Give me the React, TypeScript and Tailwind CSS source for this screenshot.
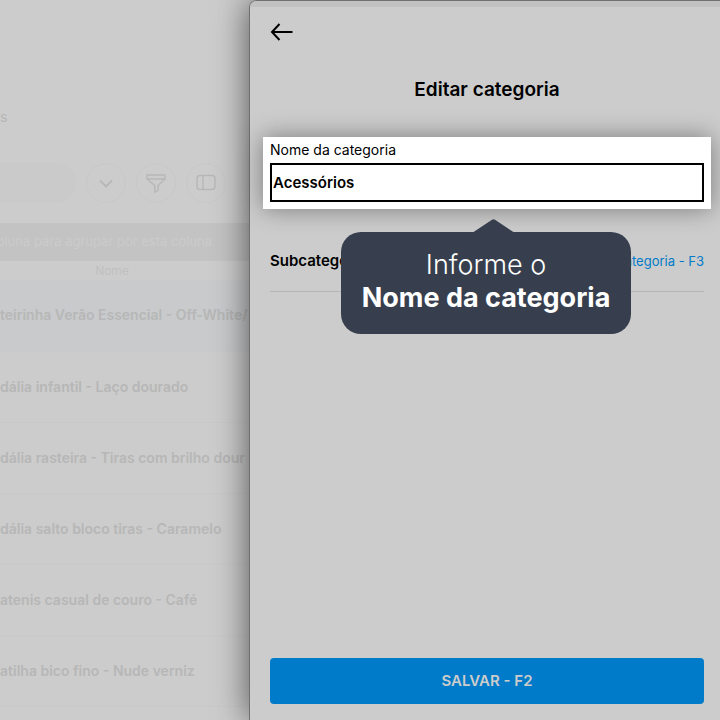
import { useState } from 'react'
import clsx from 'clsx'

const products = [
  'teirinha Verão Essencial - Off-White/',
  'dália infantil - Laço dourado',
  'dália rasteira - Tiras com brilho dour',
  'dália salto bloco tiras - Caramelo',
  'atenis casual de couro - Café',
  'atilha bico fino - Nude verniz',
]

function ProductList() {
  return (
    <main className="min-w-0 overflow-hidden text-[#b7b7b7]">
      <p className="h-[163px] pt-[107px] text-sm">s</p>

      {/* Barra de busca e filtros */}
      <div className="flex h-10 items-center justify-end gap-[10px] pr-[23px]">
        <div className="h-10 flex-1 rounded-r-full bg-[#cacaca]" />
        <button aria-label="Mais opções" className="flex size-10 items-center justify-center rounded-full border border-[#c8c8c8]">
          <svg className="h-3 w-4" viewBox="0 0 16 12" fill="none" stroke="currentColor" strokeWidth="1.8">
            <path d="M2 3.500l6 6 6-6" />
          </svg>
        </button>
        <button aria-label="Filtrar" className="flex size-10 items-center justify-center rounded-full border border-[#c8c8c8]">
          <svg className="size-5" viewBox="0 0 20 20" fill="none" stroke="currentColor" strokeWidth="1.4" strokeLinejoin="round">
            <path d="M1 2h18v4L12 12.500v5l-3.300 1.700v-6.700L1 6zM1 6h18" />
          </svg>
        </button>
        <button aria-label="Colunas" className="flex size-10 items-center justify-center rounded-full border border-[#c8c8c8]">
          <svg className="size-5" viewBox="0 0 20 20" fill="none" stroke="currentColor" strokeWidth="1.4">
            <rect x="1" y="2.500" width="18" height="14" rx="3" />
            <path d="M7 2.500v14" />
          </svg>
        </button>
      </div>

      {/* Tabela de produtos */}
      <div className="mt-5 flex h-[38px] items-center justify-end bg-[#c3c3c3] pr-[37px] text-[13px] whitespace-nowrap text-[#cbcbcb]">
        oluna para agrupar por esta coluna
      </div>
      <table className="w-full table-fixed border-collapse text-left">
        <thead>
          <tr className="h-[19px]">
            <th className="p-0 pr-[25px] text-center text-xs leading-4 font-normal text-[#c0c0c0]">Nome</th>
          </tr>
        </thead>
        <tbody>
          {products.map((product, i) => (
            <tr key={product} className={clsx('h-[71px] border-b border-[#c9c9c9]', i === 0 && 'bg-[#c8cacc]')}>
              <td className="p-0 text-sm font-semibold whitespace-nowrap">{product}</td>
            </tr>
          ))}
        </tbody>
      </table>
    </main>
  )
}

function Tooltip() {
  return (
    <div
      role="tooltip"
      className="absolute top-full left-[78px] z-20 mt-[23px] w-[290px] rounded-[20px] bg-[#373f4e] pt-4 pb-5 text-center text-[27px] leading-[33px] text-white"
    >
      <svg className="absolute -top-[13px] left-[131px] h-[14px] w-[43px]" viewBox="0 0 43 14" fill="#373f4e">
        <path d="M0 14L20 .8q1.500-1 3 0l20 13.200z" />
      </svg>
      <p className="font-light">Informe o</p>
      <p className="font-bold">Nome da categoria</p>
    </div>
  )
}

export default function App() {
  const [name, setName] = useState('Acessórios')

  return (
    <div className="grid h-screen grid-cols-[249fr_471fr] overflow-hidden bg-[#cccccc] font-['Inter',sans-serif] text-black">
      <ProductList />

      <aside className="relative z-10 flex min-w-0 flex-col rounded-tl-lg border-t border-l border-[#707070] bg-[#cccccc] shadow-[0_0_34px_rgba(0,0,0,0.6)]">
        <div className="h-[6px] shrink-0 rounded-tl-lg bg-[#c1c1c1]" />
        <button aria-label="Voltar" className="mt-[13px] ml-5 size-6 shrink-0">
          <svg className="size-6" viewBox="0 0 24 24" fill="none" stroke="currentColor" strokeWidth="2">
            <path d="M22.500 12H2M9.500 4L2 12l7.500 8" />
          </svg>
        </button>

        <h1 className="mt-[33px] mr-4 ml-5 text-center text-[19px] leading-[26px] font-semibold">Editar categoria</h1>

        {/* Campo em destaque */}
        <div className="relative mt-[34px] mr-[9px] ml-[13px] bg-white px-[7px] pt-[3px] pb-[7px] shadow-[0_0_24px_rgba(0,0,0,0.4)]">
          <label htmlFor="category-name" className="block text-sm leading-5">
            Nome da categoria
          </label>
          <input
            id="category-name"
            type="text"
            value={name}
            onChange={(e) => setName(e.target.value)}
            className="mt-[3px] block h-[39px] w-full border-2 border-black bg-white px-[1px] text-[15px] font-semibold outline-none"
          />
          <Tooltip />
        </div>

        <div className="mr-4 ml-5 flex h-[83px] items-end justify-between border-b border-[#b5b5b5] pb-5">
          <h2 className="text-[15px] leading-5 font-semibold">Subcategorias</h2>
          <a href="#nova-subcategoria" className="text-[13px] leading-5 text-[#007bc9]">
            Nova subcategoria - F3
          </a>
        </div>

        <button className="mt-auto mr-4 mb-4 ml-5 h-[46px] shrink-0 rounded bg-[#007bc9] text-[15px] font-semibold text-[#cccccc]">
          SALVAR - F2
        </button>
      </aside>
    </div>
  )
}
